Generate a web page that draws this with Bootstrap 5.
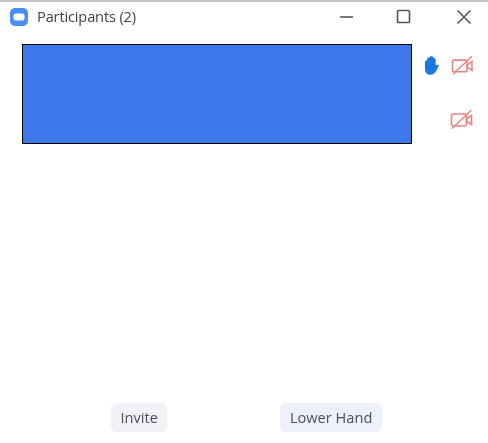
<!DOCTYPE html>
<html lang="en">
<head>
<meta charset="utf-8">
<title>Participants (2)</title>
<link href="https://cdn.jsdelivr.net/npm/bootstrap@5.3.0/dist/css/bootstrap.min.css" rel="stylesheet">
<style>
html,body{height:100%;background:#fff;}
body{font-family:"Open Sans","Noto Sans",sans-serif;overflow:hidden;}
.win{width:488px;height:443px;border-top:2px solid #c4c4c4;}
.titlebar{height:30px;padding-left:10px;}
.zoomlogo{display:block;width:18px;height:18px;margin-right:9px;filter:blur(.4px);}
.wintitle{font-size:14.6px;color:#3f3f44;letter-spacing:-.15px;filter:blur(.25px);}
.winbtns{margin-right:16px;}
.winbtns svg{display:block;width:16px;height:16px;filter:blur(.3px);}
.wb-min{margin-right:41px;}
.wb-max{margin-right:44px;}
.content{height:338px;padding:12px 0 0 22px;}
.bluebox{width:390px;height:100px;background:#3d78ea;border:1px solid #000;}
.statuses{width:76px;}
.statusrow{height:54px;padding:0 14px 12px 10px;}
.hand{width:18px;height:22px;margin-right:11px;filter:blur(.4px);}
.cam{width:24px;height:20px;filter:blur(.3px);}
.foot{height:73px;padding-top:33px;}
.pbtn{font-size:14.6px;line-height:19px;padding:5px 9.5px;border-radius:6px;color:#4c4f5c;background:#f1f2f8;filter:blur(.25px);}
.pbtn-b{background:#edf1f9;}
.footgap{width:113px;}
.ms-invite{margin-left:111px;}
</style>
<script src="https://cdn.jsdelivr.net/npm/bootstrap@5.3.0/dist/js/bootstrap.bundle.min.js"></script>
</head>
<body class="m-0">
<div class="win d-flex flex-column">
  <div class="titlebar d-flex align-items-center">
    <svg class="zoomlogo" viewBox="0 0 18 18"><rect width="18" height="18" rx="5" fill="#4a8cf0"/><rect x="3.500" y="5.500" width="11" height="7" rx="2.500" fill="#fff"/></svg>
    <span class="wintitle">Participants (2)</span>
    <div class="winbtns d-flex align-items-center ms-auto">
      <svg class="wb-min" viewBox="0 0 16 16"><path d="M1 8h13" stroke="#555" stroke-width="1.600"/></svg>
      <svg class="wb-max" viewBox="0 0 16 16"><rect x="1.500" y="1.500" width="12" height="12" rx="1" fill="none" stroke="#555" stroke-width="1.600"/></svg>
      <svg viewBox="0 0 16 16"><path d="m1.500 1.500 13 13m0-13-13 13" stroke="#555" stroke-width="1.600"/></svg>
    </div>
  </div>
  <div class="content d-flex align-items-start">
    <div class="bluebox flex-shrink-0"></div>
    <div class="statuses flex-shrink-0">
      <div class="statusrow d-flex align-items-center justify-content-end">
        <svg class="hand" viewBox="0 0 18 22"><path d="M3 14V8c0-1.500 1.200-2 2-1.500C5 4 6 3 7.500 3.500 8 1.500 11 1.500 11.800 3.500 13 3.500 14 4.500 14 6v5.500c1-1.300 3.500-.8 3 1L14.500 17c-1 2.500-3 4-6 4C5 21 3 18 3 14z" fill="#1b78e2"/></svg>
        <svg class="cam" viewBox="0 0 24 20"><rect x="1.500" y="5" width="15" height="12" rx="2" fill="none" stroke="#ea8580" stroke-width="1.600"/><path d="m16.500 10 5-3.500v9l-5-3.500z" fill="none" stroke="#ea8580" stroke-width="1.600"/><path d="M2 19.500 21.500 1" stroke="#ea8580" stroke-width="1.600"/></svg>
      </div>
      <div class="statusrow d-flex align-items-center justify-content-end">
        <svg class="cam" viewBox="0 0 24 20"><rect x="1.500" y="5" width="15" height="12" rx="2" fill="none" stroke="#ea8580" stroke-width="1.600"/><path d="m16.500 10 5-3.500v9l-5-3.500z" fill="none" stroke="#ea8580" stroke-width="1.600"/><path d="M2 19.500 21.500 1" stroke="#ea8580" stroke-width="1.600"/></svg>
      </div>
    </div>
  </div>
  <div class="foot d-flex align-items-start">
    <span class="pbtn ms-invite">Invite</span>
    <span class="footgap"></span>
    <span class="pbtn pbtn-b">Lower Hand</span>
  </div>
</div>
</body>
</html>
